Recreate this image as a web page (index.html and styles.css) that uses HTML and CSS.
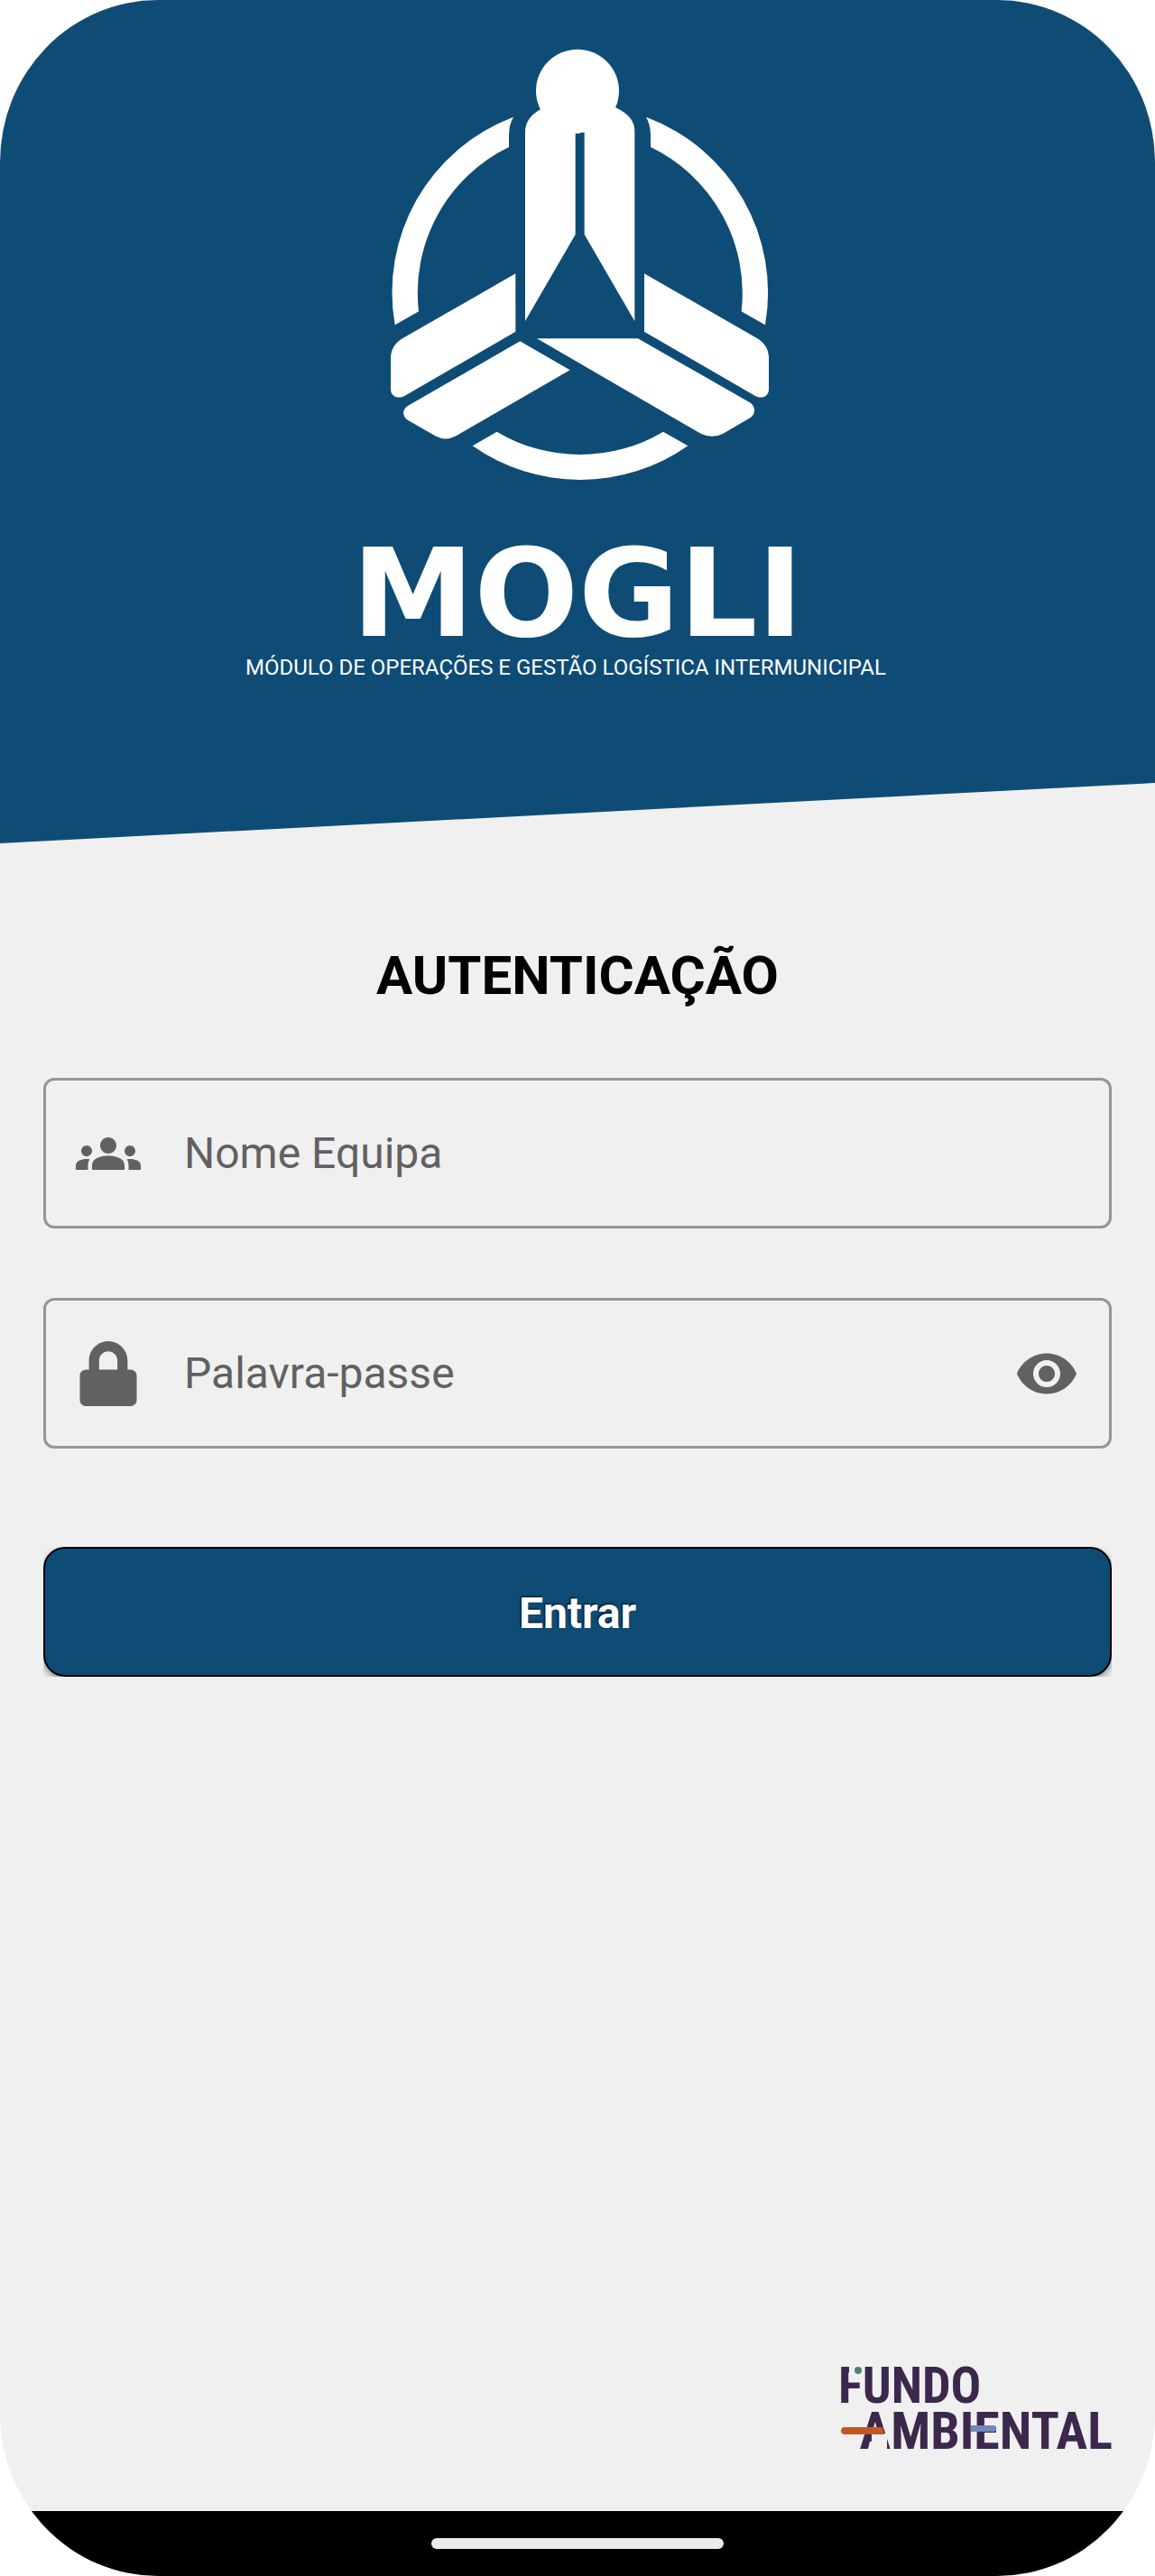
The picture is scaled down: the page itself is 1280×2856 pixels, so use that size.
FILE: index.html
```html
<!DOCTYPE html>
<html lang="pt">
<head>
  <meta charset="utf-8">
  <meta name="viewport" content="width=device-width, initial-scale=1">
  <title>MOGLI - Autenticação</title>
  <link rel="stylesheet" href="styles.css">
</head>
<body>
  <div class="screen">
    <header class="hero">
      <svg class="hero-mark" viewBox="0 0 1440 1560" aria-hidden="true">
        <g fill="#fff">
          <circle cx="720" cy="212" r="138"/>
          <path d="M546 978V345Q548 302 594 275L640 240H800L850 269Q910 298 910 345V978L743 690V351H729V354H713V690Z"/>
          <path d="M507 299Q492 325 492 360V399A540 540 0 0 0 192 946L113 991A624 624 0 0 1 507 299Z"/>
          <path d="M948 299Q963 325 963 360V399A540 540 0 0 1 1265 946L1344 991A624 624 0 0 0 948 299Z"/>
          <path d="M371 1393L452 1346A540 540 0 0 0 1005 1346L1087 1393A624 624 0 0 1 371 1393Z"/>
          <path d="M514 820V1013L145 1227C120 1240 99 1225 99 1205V1095Q101 1060 134 1038Z"/>
          <path d="M942 820V1013L1311 1227C1336 1240 1356 1225 1356 1205V1095Q1354 1060 1322 1038Z"/>
          <path d="M529 1045L695 1141L318 1359Q282 1379 247 1360L157 1308C136 1295 136 1272 157 1259Z"/>
          <path d="M585 1036H921L1293 1249C1313 1262 1313 1287 1295 1299L1203 1353Q1168 1370 1131 1353Z"/>
        </g>
      </svg>
      <h1 class="hero-name">MOGLI</h1>
      <p class="hero-tagline">MÓDULO DE OPERAÇÕES E GESTÃO LOGÍSTICA INTERMUNICIPAL</p>
    </header>

    <main class="content">
      <h2 class="title">AUTENTICAÇÃO</h2>
      <form class="login">
        <div class="field">
          <svg class="icon" viewBox="0 0 24 24" aria-hidden="true">
            <path d="M12 12.75c1.63 0 3.07.39 4.24.9 1.08.48 1.76 1.56 1.76 2.73V18H6v-1.61c0-1.18.68-2.26 1.76-2.73 1.17-.52 2.61-.91 4.24-.91zM4 13c1.1 0 2-.9 2-2s-.9-2-2-2-2 .9-2 2 .9 2 2 2zm1.13 1.1c-.37-.06-.74-.1-1.13-.1-.99 0-1.93.21-2.78.58C.48 14.9 0 15.62 0 16.43V18h4.5v-1.61c0-.83.23-1.61.63-2.29zM20 13c1.1 0 2-.9 2-2s-.9-2-2-2-2 .9-2 2 .9 2 2 2zm4 3.43c0-.81-.48-1.53-1.22-1.85-.85-.37-1.79-.58-2.78-.58-.39 0-.76.04-1.13.1.4.68.63 1.46.63 2.29V18H24v-1.57zM12 6c1.66 0 3 1.34 3 3s-1.34 3-3 3-3-1.34-3-3 1.34-3 3-3z"/>
          </svg>
          <input class="field-input" type="text" name="team" placeholder="Nome Equipa" aria-label="Nome Equipa">
        </div>
        <div class="field">
          <svg class="icon" viewBox="-32 0 512 512" aria-hidden="true">
            <path d="M400 224h-24v-72C376 68.200 307.800 0 224 0S72 68.200 72 152v72H48c-26.500 0-48 21.500-48 48v192c0 26.500 21.500 48 48 48h352c26.500 0 48-21.500 48-48V272c0-26.500-21.500-48-48-48zm-104 0H152v-72c0-39.700 32.300-72 72-72s72 32.300 72 72v72z"/>
          </svg>
          <input class="field-input" type="password" name="password" placeholder="Palavra-passe" aria-label="Palavra-passe">
          <button class="reveal" type="button" aria-label="Mostrar palavra-passe">
            <svg class="icon" viewBox="0 0 24 24" aria-hidden="true">
              <path d="M12 4.500C7 4.500 2.730 7.610 1 12c1.730 4.390 6 7.500 11 7.500s9.270-3.110 11-7.500c-1.730-4.390-6-7.500-11-7.500zM12 17c-2.760 0-5-2.240-5-5s2.240-5 5-5 5 2.240 5 5-2.240 5-5 5zm0-8c-1.660 0-3 1.340-3 3s1.340 3 3 3 3-1.340 3-3-1.340-3-3-3z"/>
            </svg>
          </button>
        </div>
        <div class="submit-row">
          <button class="submit" type="submit">Entrar</button>
        </div>
      </form>
      <svg class="sponsor" viewBox="0 0 300 92" role="img" aria-label="Fundo Ambiental">
        <text class="sponsor-text" x="-3" y="40">FUNDO</text>
        <text class="sponsor-text sponsor-text-large" x="301" y="91" text-anchor="end">AMBIENTAL</text>
        <rect x="9" y="-2" width="15" height="18" fill="#f0f0f0"/>
        <rect x="34" y="74" width="17" height="18" fill="#f0f0f0"/>
        <circle cx="19" cy="4" r="4" fill="#4f8370"/>
        <path d="M4 67H46L48 75H4A4 4 0 0 1 4 67Z" fill="#c15724"/>
        <path d="M144 65H170A4 4 0 0 1 170 72H144Z" fill="#7088bb"/>
      </svg>
    </main>

    <footer class="system-bar"><span class="system-handle"></span></footer>
  </div>
</body>
</html>
```
FILE: styles.css
```css
* {
  box-sizing: border-box;
}

body {
  margin: 0;
  background: #fff;
  font-family: Roboto, "Liberation Sans", sans-serif;
}

.screen {
  display: flex;
  flex-direction: column;
  min-height: 100vh;
  overflow: hidden;
  border-radius: 175px / 180px;
  background: #f0f0f0;
}

.hero {
  display: flex;
  flex-direction: column;
  align-items: center;
  padding: 30px 48px 181px;
  background: #0e4c76;
  color: #fff;
  clip-path: polygon(0 0, 100% 0, 100% calc(100% - 67px), 0 100%);
}

.hero-mark {
  width: 480px;
  height: 520px;
}

.hero-name {
  margin: 40px 0 0;
  font-family: "DejaVu Sans", sans-serif;
  font-size: 136px;
  font-weight: 700;
  line-height: 136px;
}

.hero-tagline {
  margin: 0;
  padding-right: 26px;
  font-size: 24px;
  line-height: 28px;
}

.content {
  display: flex;
  flex: 1;
  flex-direction: column;
  padding: 109px 48px 68px;
}

.title {
  margin: 0 0 75px;
  font-size: 60px;
  font-weight: 700;
  line-height: 76px;
  text-align: center;
  color: #000;
}

.login {
  display: flex;
  flex-direction: column;
  gap: 77px;
}

.field {
  display: flex;
  align-items: center;
  height: 167px;
  padding: 0 33px;
  border: 3px solid #969696;
  border-radius: 12px;
}

.icon {
  display: block;
  flex: none;
  width: 72px;
  height: 72px;
  fill: #616161;
}

.field-input {
  flex: 1;
  min-width: 0;
  height: 100%;
  margin-left: 48px;
  padding: 0;
  border: 0;
  outline: 0;
  background: transparent;
  font: 400 48px/56px Roboto, "Liberation Sans", sans-serif;
  color: #212121;
}

.field-input::placeholder {
  color: #616161;
  opacity: 1;
}

.reveal {
  padding: 0;
  border: 0;
  background: transparent;
}

.submit-row {
  margin-top: 32px;
  overflow: hidden;
}

.submit {
  display: block;
  width: 100%;
  height: 144px;
  padding: 4px 0 0;
  border: 2px solid #000;
  border-radius: 24px;
  background: #0e4c76;
  box-shadow: 0 4px 8px rgba(0, 0, 0, 0.4);
  font: 700 48px/56px Roboto, "Liberation Sans", sans-serif;
  color: #fff;
  text-shadow: -1px -1px 2px #000;
}

.sponsor {
  width: 300px;
  height: 92px;
  margin-top: auto;
  margin-left: auto;
  overflow: visible;
}

.sponsor-text {
  font-family: "Liberation Sans Narrow", "Roboto Condensed", "Open Sans Condensed", "DejaVu Sans Condensed", sans-serif;
  font-size: 56px;
  font-weight: 700;
  fill: #3c284d;
}

.sponsor-text-large {
  font-size: 58px;
}

.system-bar {
  display: flex;
  align-items: center;
  justify-content: center;
  height: 72px;
  background: #000;
}

.system-handle {
  width: 324px;
  height: 12px;
  border-radius: 6px;
  background: #ebebeb;
}
```
